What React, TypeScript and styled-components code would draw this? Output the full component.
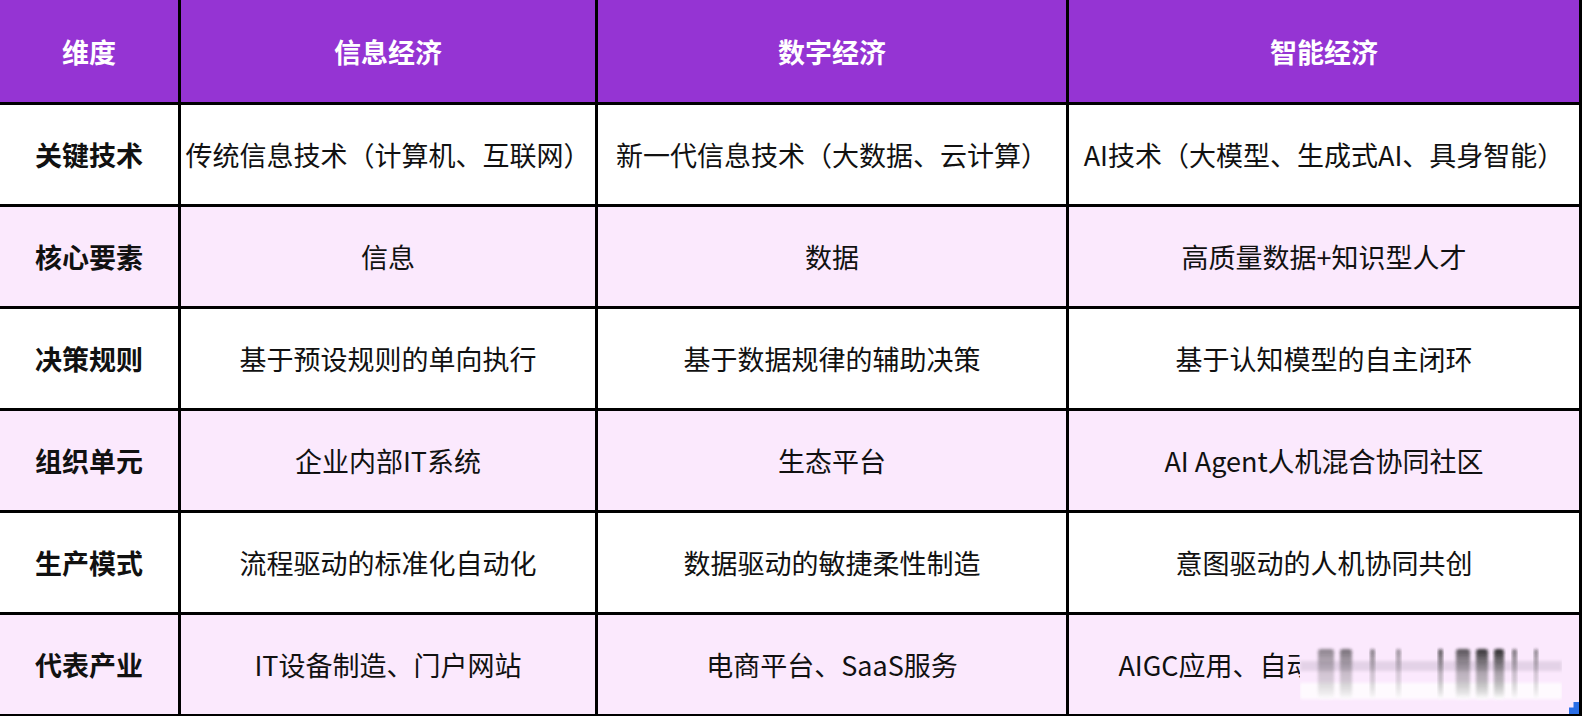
import React from "react";
import styled, { createGlobalStyle } from "styled-components";

const Global = createGlobalStyle`
  html, body { margin: 0; padding: 0; background: #ffffff; }
  body { font-family: "Noto Sans CJK SC", "Microsoft YaHei", sans-serif; }
`;

const Grid = styled.div`
  position: relative;
  display: grid;
  grid-template-columns: 178px 414px 468px 510px;
  grid-template-rows: 102px repeat(6, 99px);
  gap: 3px;
  padding: 0 3px 3px 0;
  width: max-content;
  background: #000000;
`;

const HeadCell = styled.div`
  display: flex;
  align-items: center;
  justify-content: center;
  background: #9534d3;
  color: #ffffff;
  font-size: 27px;
  font-weight: 700;
  white-space: nowrap;
`;

const Cell = styled.div<{ $alt: boolean; $bold?: boolean }>`
  display: flex;
  align-items: center;
  justify-content: center;
  background: ${(p) => (p.$alt ? "#fbe9fd" : "#ffffff")};
  color: #111111;
  font-size: 27px;
  font-weight: ${(p) => (p.$bold ? 700 : 400)};
  white-space: nowrap;
  overflow: hidden;
`;

const Watermark = styled.svg`
  position: absolute;
  right: 20px;
  bottom: 12px;
  width: 262px;
  height: 64px;
  pointer-events: none;
`;

const Corner = styled.div`
  position: absolute;
  right: 3px;
  bottom: 3px;
  width: 10px;
  height: 12px;
  background: #2a6ee6;
  clip-path: polygon(100% 0, 100% 100%, 0 100%, 0 45%, 45% 45%, 45% 0);
`;

const headers = ["维度", "信息经济", "数字经济", "智能经济"];

const rows: string[][] = [
  ["关键技术", "传统信息技术（计算机、互联网）", "新一代信息技术（大数据、云计算）", "AI技术（大模型、生成式AI、具身智能）"],
  ["核心要素", "信息", "数据", "高质量数据+知识型人才"],
  ["决策规则", "基于预设规则的单向执行", "基于数据规律的辅助决策", "基于认知模型的自主闭环"],
  ["组织单元", "企业内部IT系统", "生态平台", "AI Agent人机混合协同社区"],
  ["生产模式", "流程驱动的标准化自动化", "数据驱动的敏捷柔性制造", "意图驱动的人机协同共创"],
  ["代表产业", "IT设备制造、门户网站", "电商平台、SaaS服务", "AIGC应用、自动驾驶、具身机器人"],
];

const bars = [
  { x: 18, w: 16, o: 0.5 },
  { x: 40, w: 12, o: 0.6 },
  { x: 70, w: 5, o: 0.55 },
  { x: 96, w: 5, o: 0.45 },
  { x: 138, w: 5, o: 0.75 },
  { x: 156, w: 14, o: 0.75 },
  { x: 176, w: 12, o: 0.9 },
  { x: 194, w: 10, o: 0.95 },
  { x: 212, w: 5, o: 0.6 },
  { x: 234, w: 4, o: 0.55 },
];

export default function App() {
  return (
    <>
      <Global />
      <Grid>
        {headers.map((h) => (
          <HeadCell key={h}>{h}</HeadCell>
        ))}
        {rows.map((r, i) =>
          r.map((c, j) => (
            <Cell key={`${i}-${j}`} $alt={i % 2 === 1} $bold={j === 0}>
              {c}
            </Cell>
          ))
        )}
        <Watermark viewBox="0 0 262 64">
          <defs>
            <filter id="wb" x="-20%" y="-40%" width="140%" height="180%">
              <feGaussianBlur stdDeviation="1.4" />
            </filter>
            <linearGradient id="wg" x1="0" y1="0" x2="0" y2="1">
              <stop offset="0" stopColor="#111" stopOpacity="0.95" />
              <stop offset="0.5" stopColor="#666" stopOpacity="0.55" />
              <stop offset="1" stopColor="#fff" stopOpacity="1" />
            </linearGradient>
          </defs>
          <rect x="0" y="4" width="262" height="56" fill="#fbe9fd" />
          <rect x="0" y="20" width="262" height="10" fill="#cdbdd2" opacity="0.5" filter="url(#wb)" />
          <rect x="0" y="42" width="262" height="16" fill="#ffffff" opacity="0.8" filter="url(#wb)" />
          {bars.map((b, k) => (
            <rect
              key={k}
              x={b.x}
              y={8}
              width={b.w}
              height={50}
              rx={3}
              fill="url(#wg)"
              opacity={b.o}
              filter="url(#wb)"
            />
          ))}
        </Watermark>
        <Corner />
      </Grid>
    </>
  );
}
